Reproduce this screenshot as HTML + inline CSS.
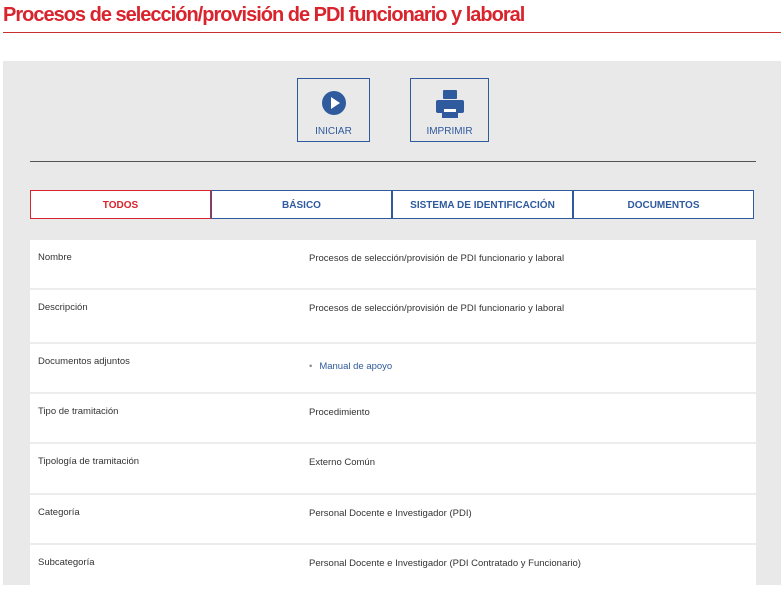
<!DOCTYPE html>
<html><head><meta charset="utf-8"><style>
*{margin:0;padding:0;box-sizing:border-box}
body{width:781px;height:585px;overflow:hidden;background:#fff;font-family:"Liberation Sans",sans-serif;position:relative}
h1{position:absolute;left:3px;top:4px;font-size:20px;font-weight:bold;color:#d9232d;letter-spacing:-1px;white-space:nowrap}
.rule{position:absolute;left:3px;top:32px;width:778px;height:1px;background:#c8302e}
.panel{position:absolute;left:3px;top:61px;width:778px;height:524px;background:#e9e9e9}
.btn{position:absolute;top:78px;height:64px;border:1px solid #2f5a9e;color:#2f5a9e;font-size:10px;text-align:center}
.btn span{position:absolute;left:0;right:0;top:47px}
.btn svg{position:absolute;left:50%;top:11px;transform:translateX(-50%)}
.div{position:absolute;left:30px;top:161px;width:726px;height:1px;background:#555}
.tab{position:absolute;top:190px;height:29px;background:#fff;border:1px solid #2f5a9e;color:#2f5a9e;font-size:10px;font-weight:bold;text-align:center;line-height:29px}
.tab.a{border-color:#d9232d;color:#d9232d}
.rows{position:absolute;left:30px;top:240px;width:726px;background:#fff}
.row{position:relative;border-bottom:2px solid #ececec;font-size:9.5px;color:#333}
.row .l{position:absolute;left:8px;top:12px}
.row .v{position:absolute;left:279px;top:13px}
a{color:#2f5a9e;text-decoration:none}
</style></head><body>
<h1>Procesos de selección/provisión de PDI funcionario y laboral</h1>
<div class="rule"></div>
<div class="panel"></div>
<div class="btn" style="left:297px;width:73px"><svg width="26" height="26" viewBox="0 0 26 26"><circle cx="13" cy="13" r="12" fill="#2f5a9e"/><path d="M10 7L19 13L10 19Z" fill="#fff"/></svg><span>INICIAR</span></div>
<div class="btn" style="left:410px;width:79px"><svg width="30" height="28" viewBox="0 0 30 28"><rect x="8" y="0" width="14" height="9" rx="1" fill="#2f5a9e"/><rect x="1" y="10" width="28" height="13" rx="2" fill="#2f5a9e"/><rect x="7" y="17" width="16" height="11" fill="#2f5a9e"/><rect x="9" y="19" width="12" height="3" fill="#fff"/></svg><span>IMPRIMIR</span></div>
<div class="div"></div>
<div class="tab a" style="left:30px;width:181px">TODOS</div>
<div class="tab" style="left:211px;width:181px">BÁSICO</div>
<div class="tab" style="left:392px;width:181px">SISTEMA DE IDENTIFICACIÓN</div>
<div class="tab" style="left:573px;width:181px">DOCUMENTOS</div>
<div class="rows">
<div class="row" style="height:50px"><div class="l">Nombre</div><div class="v">Procesos de selección/provisión de PDI funcionario y laboral</div></div>
<div class="row" style="height:54px"><div class="l">Descripción</div><div class="v">Procesos de selección/provisión de PDI funcionario y laboral</div></div>
<div class="row" style="height:50px"><div class="l">Documentos adjuntos</div><div class="v" style="top:17px"><span style="color:#888;margin-right:7px">•</span><a>Manual de apoyo</a></div></div>
<div class="row" style="height:50px"><div class="l">Tipo de tramitación</div><div class="v">Procedimiento</div></div>
<div class="row" style="height:51px"><div class="l">Tipología de tramitación</div><div class="v">Externo Común</div></div>
<div class="row" style="height:50px"><div class="l">Categoría</div><div class="v">Personal Docente e Investigador (PDI)</div></div>
<div class="row" style="height:50px;border:none"><div class="l">Subcategoría</div><div class="v">Personal Docente e Investigador (PDI Contratado y Funcionario)</div></div>
</div>
</body></html>
